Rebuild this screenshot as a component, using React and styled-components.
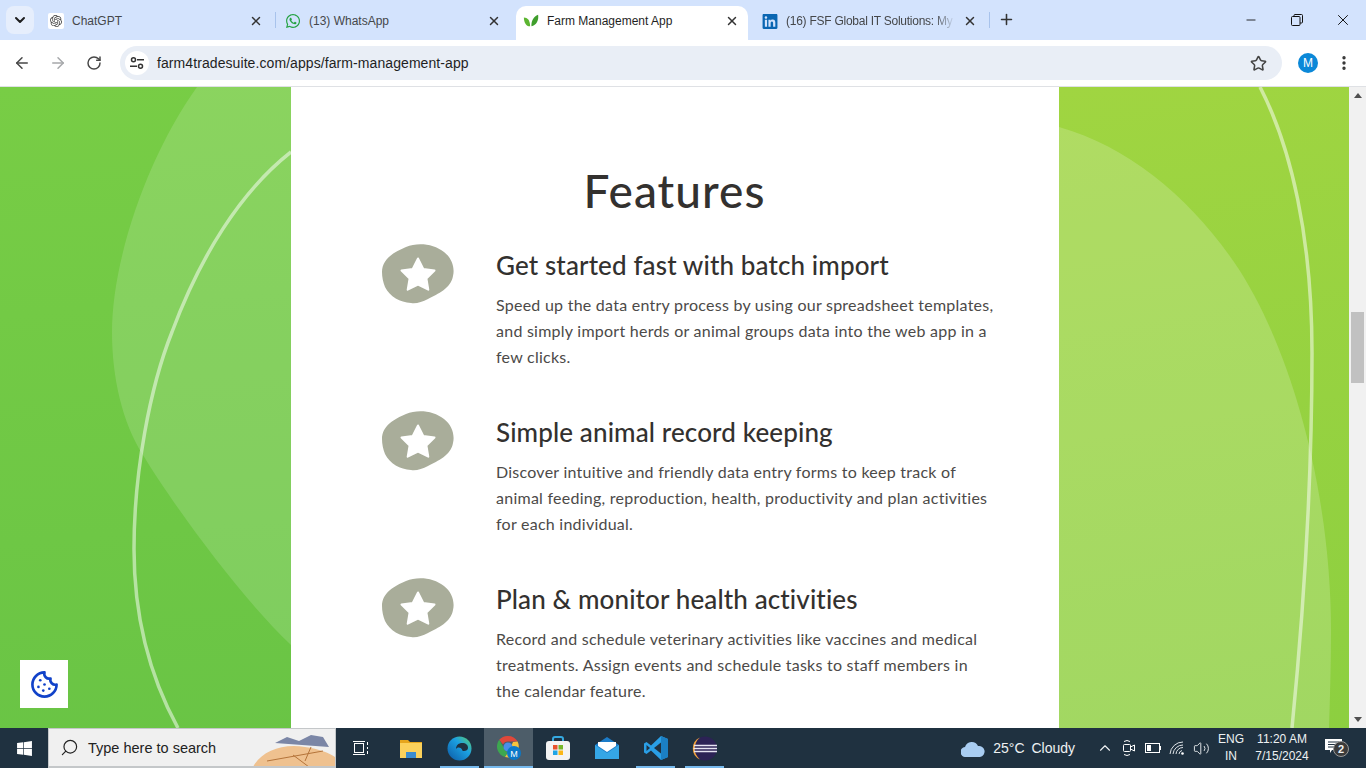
import React from "react";
import styled, { createGlobalStyle } from "styled-components";
import {
  ArrowLeft,
  ArrowRight,
  RotateCw,
  Star,
  X,
  Plus,
  ChevronDown,
  ChevronUp,
  Minus,
  EllipsisVertical,
  Cookie,
  Search,
  Volume2,
} from "lucide-react";
import { SiOpenai } from "react-icons/si";
import { FaLinkedin, FaWhatsapp, FaWindows } from "react-icons/fa";

const GlobalStyle = createGlobalStyle`
  html, body { margin: 0; height: 100%; overflow: hidden; }
  * { box-sizing: border-box; }
  body { font-family: "Liberation Sans", Arial, sans-serif; }
`;

const Shell = styled.div`
  width: 1366px;
  height: 768px;
  display: flex;
  flex-direction: column;
  overflow: hidden;
  position: relative;
`;

/* browser chrome */
const TabStrip = styled.div`
  height: 40px;
  background: #d3e3fd;
  display: flex;
  align-items: flex-start;
  padding: 6px 0 0 6px;
  flex: none;
`;

const TabSearch = styled.div`
  width: 28px;
  height: 28px;
  border-radius: 8px;
  background: #e6eefc;
  display: flex;
  align-items: center;
  justify-content: center;
  color: #1f1f1f;
  margin-right: 6px;
`;

const Tab = styled.div`
  width: ${(p) => p.$w}px;
  height: 34px;
  padding: 0 ${(p) => p.$pr}px 4px ${(p) => p.$pl}px;
  display: flex;
  align-items: center;
  gap: 8px;
  font-size: 12px;
  color: ${(p) => (p.$active ? "#1f1f1f" : "#45474a")};
  background: ${(p) => (p.$active ? "#fff" : "transparent")};
  border-radius: 10px 10px 0 0;
  white-space: nowrap;
`;

const TabIcon = styled.span`
  width: 16px;
  height: 16px;
  display: flex;
  align-items: center;
  justify-content: center;
  flex: none;
  color: ${(p) => p.$color || "#444"};
  background: ${(p) => p.$bg || "transparent"};
  border-radius: 2px;
`;

const TabTitle = styled.span`
  flex: 1;
  overflow: hidden;
  letter-spacing: ${(p) => (p.$fade ? "-0.25px" : "0")};
  mask-image: ${(p) => (p.$fade ? "linear-gradient(to right, #000 88%, transparent)" : "none")};
`;

const TabDivider = styled.span`
  width: 1px;
  height: 16px;
  margin-top: 6px;
  background: #a8c3ec;
  flex: none;
`;

const NewTab = styled.span`
  margin: 5px 0 0 8px;
  color: #333;
  display: flex;
`;

const WindowControls = styled.div`
  margin-left: auto;
  display: flex;
  align-items: center;
  height: 28px;
  color: #111;
`;

const WindowButton = styled.span`
  width: 46px;
  display: flex;
  justify-content: center;
`;

const Toolbar = styled.div`
  height: 47px;
  background: #fff;
  border-radius: 8px 8px 0 0;
  display: flex;
  align-items: center;
  padding-left: 4px;
  flex: none;
  border-bottom: 1px solid #dfe1e5;
`;

const NavButton = styled.span`
  width: 36px;
  display: flex;
  justify-content: center;
  color: ${(p) => (p.$off ? "#a6a8ab" : "#474747")};
`;

const Omnibox = styled.div`
  width: 1162px;
  height: 34px;
  margin-left: 8px;
  border-radius: 17px;
  background: #e9eef6;
  display: flex;
  align-items: center;
  padding: 0 15px 0 5px;
  font-size: 14px;
  color: #1f1f1f;
`;

const SiteInfo = styled.span`
  width: 24px;
  height: 24px;
  border-radius: 50%;
  background: #fff;
  display: flex;
  align-items: center;
  justify-content: center;
  margin-right: 8px;
`;

const Url = styled.span`
  flex: 1;
  letter-spacing: 0.08px;
`;

const Avatar = styled.span`
  width: 20px;
  height: 20px;
  border-radius: 50%;
  background: #0b88d8;
  color: #fff;
  font-size: 12px;
  display: flex;
  align-items: center;
  justify-content: center;
  margin-left: 16px;
`;

const MenuDots = styled.span`
  margin-left: 17px;
  display: flex;
  color: #333;
`;

/* page */
const Viewport = styled.div`
  height: 641px;
  display: flex;
  flex: none;
`;

const Page = styled.div`
  width: 1349px;
  display: grid;
  grid-template-columns: 291px 768px 290px;
  overflow: hidden;
`;

const SidePanel = styled.div`
  overflow: hidden;
  background: ${(p) => p.$bg};
  svg {
    display: block;
  }
`;

const Content = styled.main`
  background: #fff;
  padding: 77px 0 0 91px;
  color: #333;
`;

const Title = styled.h1`
  margin: 0 0 27px 0;
  width: 585px;
  text-align: center;
  font: 500 46px/54px Lato, "Noto Sans", sans-serif;
  letter-spacing: 1.05px;
  color: #33312f;
`;

const Feature = styled.section`
  display: flex;
  gap: 42px;
  height: 167px;
`;

const Blob = styled.svg`
  flex: none;
  width: 72px;
  height: 60px;
  margin-top: -1px;
`;

const FeatureBody = styled.div`
  margin-top: 3px;
`;

const FeatureTitle = styled.h2`
  margin: 0 0 10px 0;
  font: 500 26px/34px Lato, "Noto Sans", sans-serif;
  letter-spacing: 0.12px;
  color: #33312f;
`;

const FeatureText = styled.p`
  margin: 0;
  font: 400 16px/26px Lato, "Noto Sans", sans-serif;
  letter-spacing: 0.25px;
  color: #4c4a48;
  white-space: nowrap;
`;

const Scrollbar = styled.div`
  width: 17px;
  background: #f1f1f1;
  position: relative;
  display: flex;
  flex-direction: column;
  justify-content: space-between;
  align-items: center;
  padding: 6px 0;
`;

const ScrollArrow = styled.span`
  width: 0;
  height: 0;
  border-left: 4px solid transparent;
  border-right: 4px solid transparent;
  ${(p) => (p.$down ? "border-top: 5px solid #505050;" : "border-bottom: 5px solid #505050;")}
`;

const ScrollThumb = styled.span`
  position: absolute;
  top: 225px;
  left: 2px;
  width: 13px;
  height: 71px;
  background: #c1c1c1;
`;

const CookieButton = styled.button`
  position: absolute;
  left: 20px;
  top: 660px;
  width: 48px;
  height: 48px;
  border: 0;
  padding: 0;
  background: #fff;
  color: #1142c9;
  display: flex;
  align-items: center;
  justify-content: center;
`;

/* windows taskbar */
const Taskbar = styled.footer`
  height: 40px;
  background: #1f3140;
  display: flex;
  flex: none;
  color: #fff;
`;

const StartButton = styled.span`
  width: 48px;
  display: flex;
  align-items: center;
  justify-content: center;
`;

const SearchBox = styled.div`
  width: 288px;
  background: #f0f0f0;
  border: 1px solid #c4c7c9;
  border-bottom-width: 2px;
  display: flex;
  align-items: center;
  padding-left: 11px;
  gap: 9px;
  color: #222;
  font: 400 14.5px "Liberation Sans", sans-serif;
  position: relative;
  overflow: hidden;
`;

const SearchArt = styled.svg`
  position: absolute;
  right: 0;
  top: 0;
`;

const AppSlot = styled.span`
  width: 49px;
  display: flex;
  align-items: center;
  justify-content: center;
  position: relative;
  background: ${(p) => (p.$active ? "#4d5d69" : "transparent")};
  &::after {
    content: "";
    display: ${(p) => (p.$running ? "block" : "none")};
    position: absolute;
    bottom: 0;
    left: ${(p) => (p.$active ? 0 : 5)}px;
    right: ${(p) => (p.$active ? 0 : 5)}px;
    height: 2px;
    background: #76b9ed;
  }
`;

const AppList = styled.div`
  display: flex;
  margin-left: 1px;
`;

const Tray = styled.div`
  margin-left: auto;
  display: flex;
  align-items: center;
  font: 400 14px "Liberation Sans", sans-serif;
  color: #eef1f3;
  white-space: nowrap;
`;

const Weather = styled.span`
  display: flex;
  align-items: center;
  gap: 8px;
  margin-right: 18px;
  word-spacing: 3px;
`;

const TrayIcon = styled.span`
  width: 24px;
  display: flex;
  justify-content: center;
`;

const TrayText = styled.span`
  font-size: 12px;
  line-height: 17px;
  text-align: center;
  width: ${(p) => p.$w}px;
  margin-left: ${(p) => p.$ml || 0}px;
`;

const Notify = styled.span`
  width: 32px;
  margin-right: 17px;
  margin-top: -4px;
  display: flex;
  justify-content: center;
  position: relative;
`;

const NotifyBadge = styled.span`
  position: absolute;
  left: 16px;
  top: 2px;
  width: 16px;
  height: 16px;
  border-radius: 50%;
  background: #3b3b3b;
  border: 1px solid #999;
  font: 700 11px/14px "Liberation Sans", sans-serif;
  text-align: center;
`;

const tabs = [
  { title: "ChatGPT", w: 235, pl: 8, pr: 12, divider: true, icon: <SiOpenai size={12} />, bg: "#fff" },
  { title: "(13) WhatsApp", w: 240, pl: 9, pr: 15, icon: <FaWhatsapp size={16} />, color: "#25a243" },
  { title: "Farm Management App", w: 232, pl: 7, pr: 9, active: true, icon: <LeafIcon /> },
  { title: "(16) FSF Global IT Solutions: My", w: 241, pl: 14, pr: 12, divider: true, fade: true, icon: <FaLinkedin size={17} />, color: "#0a66b2" },
];

const features = [
  {
    title: "Get started fast with batch import",
    lines: [
      "Speed up the data entry process by using our spreadsheet templates,",
      "and simply import herds or animal groups data into the web app in a",
      "few clicks.",
    ],
  },
  {
    title: "Simple animal record keeping",
    lines: [
      "Discover intuitive and friendly data entry forms to keep track of",
      "animal feeding, reproduction, health, productivity and plan activities",
      "for each individual.",
    ],
  },
  {
    title: "Plan & monitor health activities",
    lines: [
      "Record and schedule veterinary activities like vaccines and medical",
      "treatments. Assign events and schedule tasks to staff members in",
      "the calendar feature.",
    ],
  },
];

function LeafIcon() {
  return (
    <svg width="18" height="14" viewBox="0 0 18 14">
      <path d="M8 13C3 13 1 8 1 3c4 0 7 3 7 10z" fill="#5cb531" />
      <path d="M9.500 13C9 7 12 2 17 0c1 6-2 12-7.500 13z" fill="#3f9e2c" />
    </svg>
  );
}

function StarBlob() {
  return (
    <Blob viewBox="0 0 72 60">
      <path
        d="M0 28C0 15 12 8 24 3 36-2 52 0 62 8c8 6 11 16 9 24-2 12-15 18-25 23-6 3-12 5-17 4C18 58 8 53 3 43 1 38 0 33 0 28z"
        fill="#a9ad9a"
      />
      <path
        d="M36 14.500l5.300 10.400 11.200 1.600-8.100 8 1.900 11.200L36 40.500l-10.300 5.200 1.900-11.200-8.100-8 11.200-1.600z"
        fill="#fff"
        stroke="#fff"
        strokeWidth="2"
        strokeLinejoin="round"
      />
    </Blob>
  );
}

function RestoreIcon() {
  return (
    <svg width="12" height="12" viewBox="0 0 12 12" fill="none" stroke="#111">
      <rect x="0.500" y="2.500" width="8.500" height="9" rx="1" />
      <path d="M3 2.500V1.500q0-1 1-1h6.500q1 0 1 1V8q0 1-1 1H9" />
    </svg>
  );
}

function SiteInfoIcon() {
  return (
    <svg width="14" height="12" viewBox="0 0 14 12" fill="none" stroke="#333" strokeWidth="1.500">
      <circle cx="3.500" cy="2.800" r="2" />
      <path d="M7 2.800h7M0 9.200h7" />
      <circle cx="10.500" cy="9.200" r="2" />
    </svg>
  );
}

function WifiIcon() {
  return (
    <svg width="16" height="14" viewBox="0 0 16 14" fill="none" stroke="#dfe4e8" strokeWidth="1">
      <path d="M1 13A13 13 0 0 1 14 1M4 13A10 10 0 0 1 14 4M7 13A7 7 0 0 1 14 6.500M10 13a4 4 0 0 1 3-3.500" />
      <circle cx="13.500" cy="12.500" r="1.300" fill="#fff" stroke="none" />
    </svg>
  );
}

function LeftArt() {
  return (
    <svg width="291" height="641" viewBox="0 0 291 641">
      <path
        d="M197 0C150 65 112 170 112 245c0 45 10 90 31 123 22 37 92 137 148 190V0z"
        fill="#fff"
        fillOpacity="0.14"
      />
      <path
        d="M291 65C240 105 200 170 172 245c-22 55-38 140-38 217 0 68 16 128 44 179"
        fill="none"
        stroke="#fff"
        strokeOpacity="0.5"
        strokeWidth="3.500"
      />
    </svg>
  );
}

function RightArt() {
  return (
    <svg width="290" height="641" viewBox="0 0 290 641">
      <path
        d="M0 40c70 20 130 70 175 135 55 80 97 225 97 369 0 32-1 65-2 97H0z"
        fill="#fff"
        fillOpacity="0.18"
      />
      <path
        d="M201 0c31 60 52 150 52 266 0 84-3 204-20 375"
        fill="none"
        stroke="#fff"
        strokeOpacity="0.5"
        strokeWidth="3.500"
      />
    </svg>
  );
}

function ChromeIcon() {
  return (
    <svg width="28" height="28" viewBox="0 0 28 28">
      <path d="M13 2a11 11 0 0 1 9.600 5.600H13a5.500 5.500 0 0 0-5 3L4.200 5.800A11 11 0 0 1 13 2z" fill="#e0483a" />
      <path d="M4.200 5.800 9 14a5 5 0 0 0 4 4l-3 5A11 11 0 0 1 4.200 5.800z" fill="#3da750" />
      <path d="M22.600 7.600A11 11 0 0 1 10 23l4-6 4-9z" fill="#f8c43c" />
      <circle cx="13" cy="13" r="4.500" fill="#4a8fe8" />
      <circle cx="19" cy="19" r="7" fill="#0b79c8" />
      <text x="19" y="22.500" fontSize="9" fill="#fff" textAnchor="middle" fontFamily="Liberation Sans">M</text>
    </svg>
  );
}

function TaskApp({ name }) {
  if (name === "view")
    return (
      <svg width="18" height="16" viewBox="0 0 18 16" fill="none" stroke="#fff">
        <rect x="1.500" y="3.500" width="9" height="9" />
        <path d="M0 1.500h12M0 14.500h12M14.500 2v3M14.500 7v2M14.500 11v3" />
      </svg>
    );
  if (name === "files")
    return (
      <svg width="22" height="19" viewBox="0 0 22 19">
        <path d="M0 1h8l2 2h12v4H0z" fill="#e6a61d" />
        <rect y="4" width="22" height="15" fill="#fbd15b" />
        <rect x="6" y="13" width="10" height="6" fill="#3b8ccf" />
      </svg>
    );
  if (name === "edge")
    return (
      <svg width="25" height="25" viewBox="0 0 25 25">
        <defs>
          <linearGradient id="edgeFill" x1="0" y1="1" x2="1" y2="0">
            <stop offset="0" stopColor="#0c59a4" />
            <stop offset="0.600" stopColor="#1ba1e2" />
            <stop offset="1" stopColor="#5fd068" />
          </linearGradient>
        </defs>
        <circle cx="12.500" cy="12.500" r="12" fill="url(#edgeFill)" />
        <path d="M9 13c0-4 3-6 6-6 4 0 6 2 6 5 0 2-2 3-4 3-1 0-2-.5-2-1.500-1-2-4-3-6-.500z" fill="#1f3140" />
      </svg>
    );
  if (name === "chrome") return <ChromeIcon />;
  if (name === "store")
    return (
      <svg width="24" height="24" viewBox="0 0 24 24">
        <path d="M7 6V3q0-2 2-2h6q2 0 2 2v3" fill="none" stroke="#35a9e0" strokeWidth="2" />
        <rect y="5" width="24" height="19" rx="3" fill="#f3f3f3" />
        <rect x="7" y="9" width="4.500" height="4.500" fill="#e8532e" />
        <rect x="12.500" y="9" width="4.500" height="4.500" fill="#76b82a" />
        <rect x="7" y="14.500" width="4.500" height="4.500" fill="#1fa5e6" />
        <rect x="12.500" y="14.500" width="4.500" height="4.500" fill="#fbb717" />
      </svg>
    );
  if (name === "mail")
    return (
      <svg width="24" height="22" viewBox="0 0 24 22">
        <path d="M0 8 12 0l12 8v14H0z" fill="#1c7cc8" />
        <path d="M0 8l12 8 12-8v14H0z" fill="#35a6e6" />
        <path d="M3 5h18v4l-9 6-9-6z" fill="#fff" />
      </svg>
    );
  if (name === "code")
    return (
      <svg width="24" height="24" viewBox="0 0 24 24">
        <path d="M17 0l7 3v18l-7 3L7 14.500 2.500 18 0 16.500V7.500L2.500 6 7 9.500z" fill="#2a9fe6" />
        <path d="M17 6.500 10 12l7 5.500z" fill="#1f3140" />
        <path d="M17 0l7 3v18l-7 3z" fill="#1b7fc4" />
        <path d="M2.500 9 6 12l-3.500 3z" fill="#1f3140" />
      </svg>
    );
  return (
    <svg width="25" height="25" viewBox="0 0 25 25">
      <circle cx="13" cy="12.500" r="12" fill="#2c2255" />
      <path d="M8 1.500a12 12 0 0 0 0 22A14 14 0 0 1 8 1.500z" fill="#f0a23c" />
      <path d="M2 9.500h23M1.500 12.500h24M2 15.500h23" stroke="#e6e4f2" strokeWidth="1.500" />
    </svg>
  );
}

const apps = [
  { name: "view" },
  { name: "files" },
  { name: "edge", running: true },
  { name: "chrome", running: true, active: true },
  { name: "store" },
  { name: "mail" },
  { name: "code", running: true },
  { name: "eclipse", running: true },
];

function App() {
  return (
    <Shell>
      <GlobalStyle />
      <TabStrip>
        <TabSearch>
          <ChevronDown size={16} strokeWidth={3} />
        </TabSearch>
        {tabs.map((tab) => (
          <React.Fragment key={tab.title}>
            <Tab $w={tab.w} $pl={tab.pl} $pr={tab.pr} $active={tab.active}>
              <TabIcon $color={tab.color} $bg={tab.bg}>
                {tab.icon}
              </TabIcon>
              <TabTitle $fade={tab.fade}>{tab.title}</TabTitle>
              <X size={14} strokeWidth={2.5} color="#333" />
            </Tab>
            {tab.divider ? <TabDivider /> : null}
          </React.Fragment>
        ))}
        <NewTab>
          <Plus size={17} strokeWidth={2.2} />
        </NewTab>
        <WindowControls>
          <WindowButton>
            <Minus size={14} strokeWidth={1.5} />
          </WindowButton>
          <WindowButton>
            <RestoreIcon />
          </WindowButton>
          <WindowButton>
            <X size={18} strokeWidth={1.3} />
          </WindowButton>
        </WindowControls>
      </TabStrip>
      <Toolbar>
        <NavButton>
          <ArrowLeft size={18} />
        </NavButton>
        <NavButton $off>
          <ArrowRight size={18} />
        </NavButton>
        <NavButton>
          <RotateCw size={16} strokeWidth={2.2} />
        </NavButton>
        <Omnibox>
          <SiteInfo>
            <SiteInfoIcon />
          </SiteInfo>
          <Url>farm4tradesuite.com/apps/farm-management-app</Url>
          <Star size={17} strokeWidth={2.2} color="#444" />
        </Omnibox>
        <Avatar>M</Avatar>
        <MenuDots>
          <EllipsisVertical size={18} strokeWidth={2.5} />
        </MenuDots>
      </Toolbar>
      <Viewport>
        <Page>
          <SidePanel $bg="linear-gradient(175deg, #78cd45, #69c445)">
            <LeftArt />
          </SidePanel>
          <Content>
            <Title>Features</Title>
            {features.map((feature) => (
              <Feature key={feature.title}>
                <StarBlob />
                <FeatureBody>
                  <FeatureTitle>{feature.title}</FeatureTitle>
                  <FeatureText>
                    {feature.lines.map((line) => (
                      <React.Fragment key={line}>
                        {line}
                        <br />
                      </React.Fragment>
                    ))}
                  </FeatureText>
                </FeatureBody>
              </Feature>
            ))}
          </Content>
          <SidePanel $bg="linear-gradient(170deg, #a0d541, #8ccf40)">
            <RightArt />
          </SidePanel>
        </Page>
        <Scrollbar>
          <ScrollArrow />
          <ScrollThumb />
          <ScrollArrow $down />
        </Scrollbar>
      </Viewport>
      <CookieButton aria-label="Cookie settings">
        <Cookie size={29} strokeWidth={2.2} />
      </CookieButton>
      <Taskbar>
        <StartButton>
          <FaWindows size={17} />
        </StartButton>
        <SearchBox>
          <Search size={19} strokeWidth={1.5} style={{ transform: "scaleX(-1)" }} />
          Type here to search
          <SearchArt width="82" height="38" viewBox="0 0 82 38">
            <path d="M22 14l12-6 12 4 12-6 12 2 6 10z" fill="#7b86a6" />
            <path d="M0 38C8 22 30 14 52 18c14 2 24 6 30 10v10z" fill="#efc18f" />
            <path d="M14 32 70 22M40 26l16 12M58 18l-6 14" stroke="#b5743a" fill="none" />
          </SearchArt>
        </SearchBox>
        <AppList>
          {apps.map((app) => (
            <AppSlot key={app.name} $running={app.running} $active={app.active}>
              <TaskApp name={app.name} />
            </AppSlot>
          ))}
        </AppList>
        <Tray>
          <Weather>
            <svg width="24" height="17" viewBox="0 0 24 17">
              <path d="M5 17a5 5 0 0 1-1-10 7 7 0 0 1 13-1 5.500 5.500 0 0 1 2 11z" fill="#a9cdf2" />
            </svg>
            25°C Cloudy
          </Weather>
          <TrayIcon>
            <ChevronUp size={18} strokeWidth={1.5} />
          </TrayIcon>
          <TrayIcon>
            <svg width="16" height="18" viewBox="0 0 16 18" fill="none" stroke="#fff">
              <rect x="2.500" y="5.500" width="7" height="7" rx="1" />
              <path d="M9.500 8l4-2v6l-4-2M3 2.500q3-2 6 0M3 15.500q3 2 6 0" />
            </svg>
          </TrayIcon>
          <TrayIcon>
            <svg width="16" height="10" viewBox="0 0 16 10" fill="none" stroke="#fff">
              <rect x="0.500" y="0.500" width="14" height="9" />
              <rect x="2" y="2" width="4" height="6" fill="#fff" stroke="none" />
              <path d="M15.500 3v4" />
            </svg>
          </TrayIcon>
          <TrayIcon>
            <WifiIcon />
          </TrayIcon>
          <TrayIcon>
            <Volume2 size={17} strokeWidth={1.3} />
          </TrayIcon>
          <TrayText $w={32} $ml={2}>
            ENG
            <br />
            IN
          </TrayText>
          <TrayText $w={70}>
            11:20 AM
            <br />
            7/15/2024
          </TrayText>
          <Notify>
            <svg width="17" height="14" viewBox="0 0 17 14">
              <path d="M0 0h17v11H7l-2 3v-3H0z" fill="#fff" />
              <path d="M3 3h11M3 5.500h11M3 8h7" stroke="#1f3140" />
            </svg>
            <NotifyBadge>2</NotifyBadge>
          </Notify>
        </Tray>
      </Taskbar>
    </Shell>
  );
}

export default App;
